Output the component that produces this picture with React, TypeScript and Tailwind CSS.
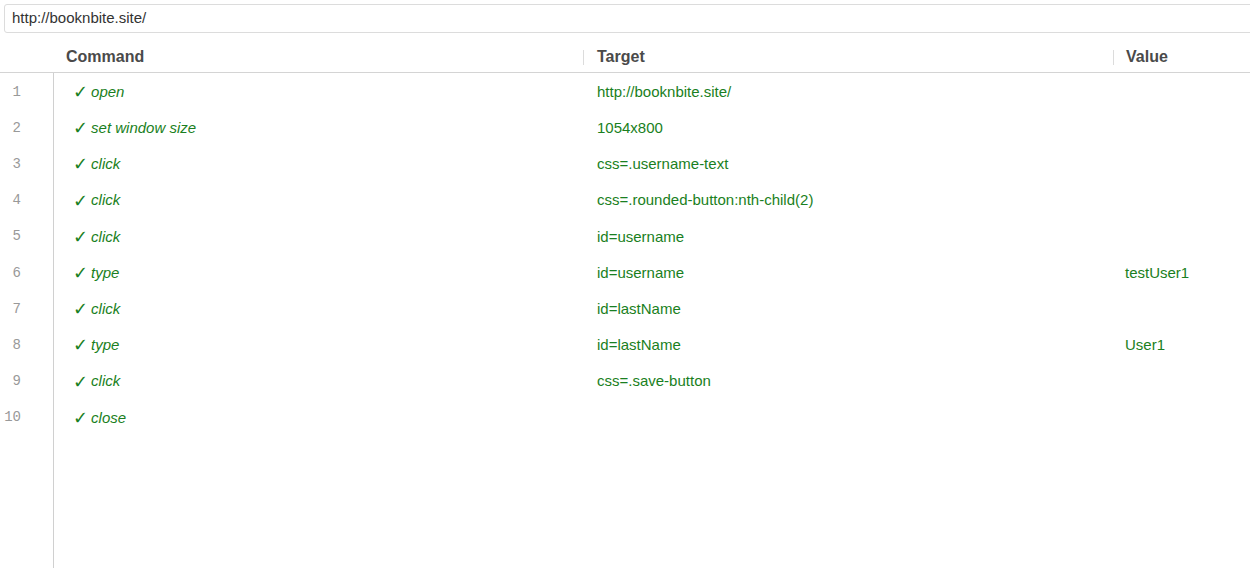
import React from "react";

const rows: [string, string, string][] = [
  ["open", "http://booknbite.site/", ""],
  ["set window size", "1054x800", ""],
  ["click", "css=.username-text", ""],
  ["click", "css=.rounded-button:nth-child(2)", ""],
  ["click", "id=username", ""],
  ["type", "id=username", "testUser1"],
  ["click", "id=lastName", ""],
  ["type", "id=lastName", "User1"],
  ["click", "css=.save-button", ""],
  ["close", "", ""],
];

export default function App() {
  return (
    <div
      className="w-[1250px] h-[568px] bg-white overflow-hidden flex flex-col"
      style={{ fontFamily: '"Liberation Sans", Arial, sans-serif' }}
    >
      <div className="pt-[4px] pl-[4px] w-[1260px]">
        <div className="h-[29px] border border-[#dcdcdc] rounded-[3px] pl-[7px] flex items-center text-[15px] text-[#333]">
          http://booknbite.site/
        </div>
      </div>
      <div className="mt-[7px] h-[33px] border-b border-[#d4d4d4] flex items-center text-[16px] font-bold text-[#4a4a4a] pt-[2px]">
        <div className="w-[54px]" />
        <div className="w-[529px] pl-[12px]">Command</div>
        <div className="w-[530px] flex items-center">
          <div className="w-px h-[15px] bg-[#dcdcdc]" />
          <div className="pl-[13px]">Target</div>
        </div>
        <div className="flex-1 flex items-center">
          <div className="w-px h-[15px] bg-[#dcdcdc]" />
          <div className="pl-[12px]">Value</div>
        </div>
      </div>
      <div className="flex flex-1">
        <div className="w-[54px] border-r border-[#d0d0d0] flex flex-col pt-[1px]">
          {rows.map((_, i) => (
            <div
              key={i}
              className="h-[36.2px] flex items-center justify-end pr-[32px] text-[14px] text-[#999]"
              style={{ fontFamily: '"Liberation Mono", "Courier New", monospace' }}
            >
              {i + 1}
            </div>
          ))}
        </div>
        <div className="flex-1 flex flex-col pt-[1px]">
          {rows.map(([cmd, target, value], i) => (
            <div key={i} className="h-[36.2px] flex items-center text-[15px] text-[#1a7f22]">
              <div className="w-[529px] pl-[19px] flex items-center">
                <span
                  className="text-[18px] mr-[3px] leading-none font-bold"
                  style={{ fontFamily: '"DejaVu Sans", sans-serif' }}
                >
                  ✓
                </span>
                <span className="italic">{cmd}</span>
              </div>
              <div className="w-[530px] pl-[14px]">{target}</div>
              <div className="flex-1 pl-[12px]">{value}</div>
            </div>
          ))}
        </div>
      </div>
    </div>
  );
}
